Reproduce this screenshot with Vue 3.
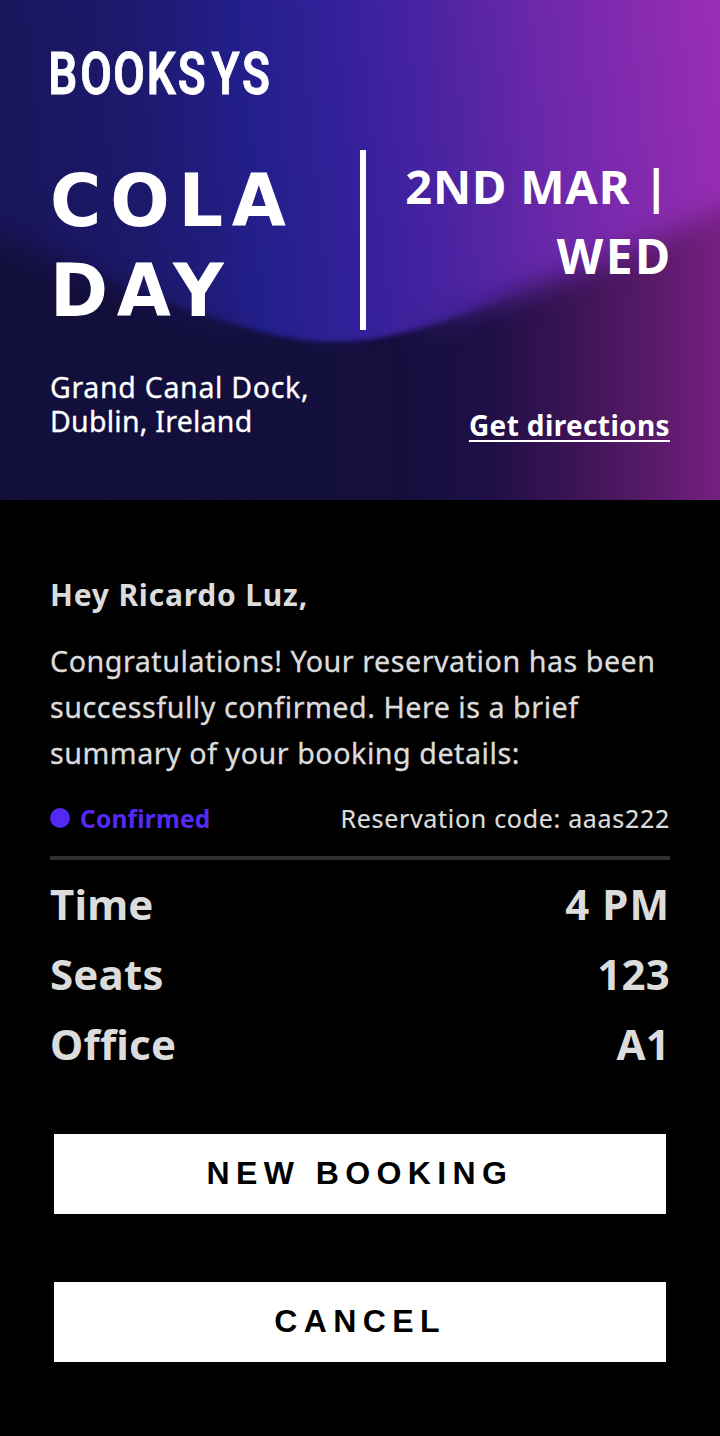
<script setup>
const details = [
  { label: 'Time', value: '4 PM' },
  { label: 'Seats', value: '123' },
  { label: 'Office', value: 'A1' },
]
const logoX = '-2.2 38.9 81.2 124 163.9 207 246.3'
</script>

<template>
  <main class="page">
    <header class="hero">
      <svg class="backdrop" viewBox="0 0 720 500" preserveAspectRatio="none" aria-hidden="true">
        <defs>
          <linearGradient id="base" x1="0" y1="0" x2="1" y2="0">
            <stop offset="0" stop-color="#130f3c" /><stop offset=".55" stop-color="#140f3d" />
            <stop offset=".68" stop-color="#1f1045" /><stop offset=".8" stop-color="#3d1456" />
            <stop offset=".9" stop-color="#571a68" /><stop offset="1" stop-color="#742080" />
          </linearGradient>
          <linearGradient id="glow" gradientUnits="userSpaceOnUse" x1="5" y1="70" x2="720" y2="0">
            <stop offset="0" stop-color="#19155b" /><stop offset=".18" stop-color="#1d1a6e" />
            <stop offset=".33" stop-color="#231f8b" /><stop offset=".46" stop-color="#332099" />
            <stop offset=".6" stop-color="#4c24a2" /><stop offset=".75" stop-color="#6d28aa" />
            <stop offset=".9" stop-color="#882bb0" /><stop offset="1" stop-color="#9b2db6" />
          </linearGradient>
          <linearGradient id="mid" x1="0" y1="0" x2="1" y2="0">
            <stop offset=".12" stop-color="#000" /><stop offset=".36" stop-color="#fff" />
            <stop offset=".54" stop-color="#fff" /><stop offset=".72" stop-color="#000" />
          </linearGradient>
          <filter id="soft" x="-20%" y="-20%" width="140%" height="140%"><feGaussianBlur stdDeviation="14" /></filter>
          <filter id="crisp" x="-20%" y="-20%" width="140%" height="140%"><feGaussianBlur stdDeviation="2.5" /></filter>
          <path id="edge" d="M-80-80H800V172C700 222 640 247 560 278C480 310 400 342 335 342C280 342 225 322 165 302C100 277 60 258-80 212Z" />
          <mask id="softMask" maskUnits="userSpaceOnUse" x="0" y="0" width="720" height="500">
            <use href="#edge" fill="#fff" filter="url(#soft)" />
          </mask>
          <mask id="crispMask" maskUnits="userSpaceOnUse" x="0" y="0" width="720" height="500">
            <use href="#edge" fill="#fff" filter="url(#crisp)" />
          </mask>
          <mask id="midMask" maskUnits="userSpaceOnUse" x="0" y="0" width="720" height="500">
            <rect width="720" height="500" fill="url(#mid)" />
          </mask>
        </defs>
        <rect width="720" height="500" fill="url(#base)" />
        <rect width="720" height="500" fill="url(#glow)" mask="url(#softMask)" />
        <g mask="url(#midMask)">
          <rect width="720" height="500" fill="url(#base)" />
          <rect width="720" height="500" fill="url(#glow)" mask="url(#crispMask)" />
        </g>
      </svg>

      <svg class="logo" width="240" height="80" viewBox="0 0 240 80">
        <text class="logo-text" y="64" :x="logoX" transform="scale(.78 1)">BOOKSYS</text>
      </svg>

      <div class="headline">
        <h1 class="title"><span class="title-text">COLA<br />DAY</span></h1>
        <p class="date"><span class="day">2ND MAR |</span><br /><span class="weekday">WED</span></p>
      </div>

      <div class="place">
        <address class="address"><span class="street">Grand Canal Dock,</span><br />Dublin, Ireland</address>
        <a class="directions">Get directions</a>
      </div>
    </header>

    <section class="body">
      <h2 class="greeting">Hey Ricardo Luz,</h2>
      <p class="message">Congratulations! Your reservation has been<br />successfully confirmed. Here is a brief<br />summary of your booking details:</p>
      <div class="status">
        <span class="state"><i class="dot"></i><b>Confirmed</b></span>
        <span class="code">Reservation code: aaas222</span>
      </div>
      <dl class="details">
        <div v-for="d in details" :key="d.label" class="row">
          <dt>{{ d.label }}</dt><dd>{{ d.value }}</dd>
        </div>
      </dl>
      <div class="actions">
        <button type="button">NEW BOOKING</button>
        <button type="button">CANCEL</button>
      </div>
    </section>
  </main>
</template>

<style scoped>
.page { width: 720px; height: 1436px; overflow: hidden; background: #000; color: #dcdcdc; font-family: "Noto Sans", sans-serif; }
.hero { position: relative; box-sizing: border-box; height: 500px; padding: 30px 50px 0; color: #fff; overflow: hidden; isolation: isolate; }
.backdrop { position: absolute; inset: 0; z-index: -1; width: 720px; height: 500px; }
.logo { display: block; overflow: visible; }
.logo-text { font: 600 58.6px Roboto, sans-serif; fill: #fff; stroke: #fff; stroke-width: .9px; }
.headline { display: flex; margin-top: 40px; height: 180px; }
.title { box-sizing: border-box; width: 316px; margin: 0; padding: 6px 0 0; border-right: 6px solid #fff; font: bold 73.6px/90px "DejaVu Sans", sans-serif; letter-spacing: 9.3px; }
.title-text { display: inline-block; transform: scaleX(.95); transform-origin: 0 0; }
.date { flex: 1; margin: 0; padding-top: 1px; font-size: 47px; font-weight: 700; line-height: 70px; text-align: right; white-space: nowrap; }
.day { letter-spacing: .8px; }
.weekday { margin-right: -2.5px; font-size: 48px; letter-spacing: 2.4px; }
.place { display: flex; justify-content: space-between; margin-top: 40px; }
.address { font-size: 28.5px; font-style: normal; line-height: 34px; letter-spacing: .25px; -webkit-text-stroke: .3px; }
.street { letter-spacing: .7px; }
.directions { margin-top: 38px; font-size: 28px; font-weight: 700; line-height: 34px; letter-spacing: .37px; text-decoration: underline; text-decoration-thickness: 2px; text-underline-offset: 4px; }
.body { padding: 0 50px; }
.greeting { margin: 72px 0 0; font-size: 30px; line-height: 46px; letter-spacing: .8px; }
.message { margin: 20px 0 0; font-size: 28.7px; line-height: 46px; letter-spacing: .52px; white-space: nowrap; -webkit-text-stroke: .3px; }
.status { box-sizing: border-box; display: flex; justify-content: space-between; align-items: center; height: 84px; padding-top: 4px; border-bottom: 4px solid #303030; font-size: 24.5px; }
.state { display: flex; align-items: center; gap: 10px; color: #5429f5; letter-spacing: .2px; }
.dot { width: 20px; height: 20px; border-radius: 50%; background: #5429f5; }
.code { font-size: 25px; letter-spacing: .7px; -webkit-text-stroke: .2px; }
.details { margin: 9px 0 0; }
.row { display: flex; justify-content: space-between; height: 70px; font-size: 42px; font-weight: 700; line-height: 70px; letter-spacing: .2px; }
.row dd { margin: 0; }
.row:first-child dd { letter-spacing: 1px; }
.actions { display: flex; flex-direction: column; gap: 68px; margin: 55px 4px 0; }
.actions button { height: 80px; padding: 0 0 2px; border: 0; border-radius: 0; background: #fff; color: #000; font: bold 32px/78px "Liberation Sans", Arial, sans-serif; letter-spacing: 6.4px; }
</style>

<style>
body { background: #000; }
</style>
